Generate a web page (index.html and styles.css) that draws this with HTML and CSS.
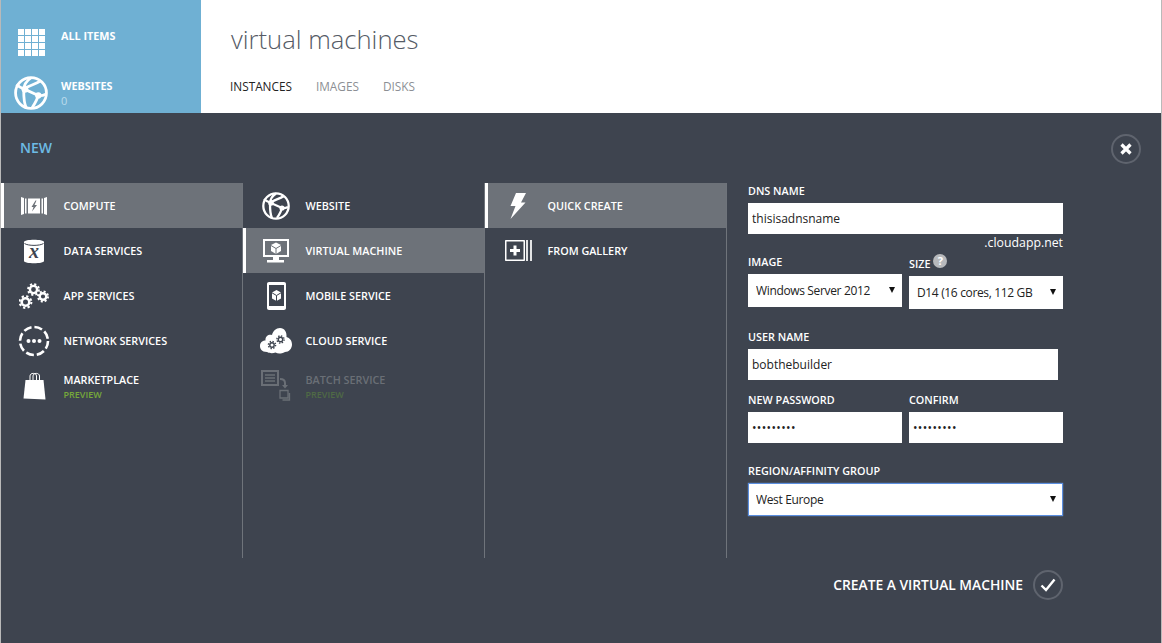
FILE: index.html
```html
<!DOCTYPE html>
<html lang="en">
<head>
<meta charset="utf-8">
<title>virtual machines</title>
<link rel="stylesheet" href="styles.css">
</head>
<body>
<div class="page">
  <header class="top">
    <nav class="tiles">
      <div class="tile tile-all">
        <svg class="tile-icon" width="27" height="27" viewBox="0 0 27 27"><path d="M0 3H27M0 10H27M0 17H27M0 24H27" stroke="#fff" stroke-width="6" stroke-dasharray="6 1" fill="none"/></svg>
        <div class="tile-text"><div class="tile-name">ALL ITEMS</div></div>
      </div>
      <div class="tile tile-web">
        <svg class="tile-icon" width="34" height="34" viewBox="0 0 28 28"><g fill="none" stroke="#fff" stroke-width="2.300"><circle cx="14" cy="14" r="12.700"/><path d="M14 1.500C10 4 8 8 8 12C8 17 8 22 10 26M2 7C4 9 6 10 9 11L20 16C22 16.500 24 16 26 15M20 16C19 20 17 23 15 26M9 10C14 7.500 18 6.500 22 4"/></g><g fill="#fff"><circle cx="9" cy="11" r="2.800"/><circle cx="20" cy="16" r="2.600"/></g></svg>
        <div class="tile-text tile-text-web"><div class="tile-name">WEBSITES</div><div class="tile-count">0</div></div>
      </div>
    </nav>
    <div class="heading">
      <h1 class="title">virtual machines</h1>
      <div class="tabs"><span class="tab tab-on">INSTANCES</span><span class="tab">IMAGES</span><span class="tab">DISKS</span></div>
    </div>
  </header>
  <main class="panel">
    <div class="panel-head">
      <div class="new">NEW</div>
      <div class="round close"><svg width="12" height="12" viewBox="0 0 12 12"><path d="M1.500 1.500L10.500 10.500M10.500 1.500L1.500 10.500" stroke="#fff" stroke-width="3.200" fill="none"/></svg></div>
    </div>
    <div class="panel-body">
      <ul class="col">
        <li class="item on">
          <span class="slot"><svg width="26" height="20" viewBox="0 0 26 20"><g fill="#fff"><path d="M0 1L3 2V18L0 19ZM4 2.500H5.500V17.500H4ZM20.500 2.500H22V17.500H20.500ZM23 2L26 1V19L23 18Z"/><path fill-rule="evenodd" d="M7 2.500H19V17.500H7ZM14.500 4.500L10.500 11H12.500L11 15.500L16 9H13.500L15.500 4.500Z"/></g></svg></span>
          <span class="lbl">COMPUTE</span>
        </li>
        <li class="item">
          <span class="slot"><svg width="22" height="26" viewBox="0 0 22 26"><path d="M1 4C1 1 21 1 21 4V23C21 26 1 26 1 23Z" fill="#fff"/><path d="M1.500 5.500C5 8 17 8 20.500 5.500" stroke="#3e444f" stroke-width="1" fill="none"/><text x="11" y="20" class="x-glyph">x</text></svg></span>
          <span class="lbl">DATA SERVICES</span>
        </li>
        <li class="item">
          <span class="slot"><svg width="30" height="26" viewBox="0 0 30 26"><g fill="none" stroke="#fff"><circle cx="14.500" cy="6.500" r="3.600" stroke-width="2.400"/><circle cx="14.500" cy="6.500" r="5.400" stroke-width="2" stroke-dasharray="2.100 2.150"/><circle cx="6.500" cy="19" r="3.800" stroke-width="2.600"/><circle cx="6.500" cy="19" r="5.900" stroke-width="2" stroke-dasharray="2.300 2.330"/><circle cx="24" cy="13.500" r="3.300" stroke-width="2.400"/><circle cx="24" cy="13.500" r="5" stroke-width="2" stroke-dasharray="2 1.930"/></g></svg></span>
          <span class="lbl">APP SERVICES</span>
        </li>
        <li class="item">
          <span class="slot"><svg width="32" height="32" viewBox="0 0 32 32"><circle cx="16" cy="16" r="14" fill="none" stroke="#fff" stroke-width="2.600" stroke-dasharray="8 3"/><g fill="#fff"><circle cx="10.500" cy="16" r="2"/><circle cx="16" cy="16" r="2"/><circle cx="21.500" cy="16" r="2"/></g></svg></span>
          <span class="lbl">NETWORK SERVICES</span>
        </li>
        <li class="item">
          <span class="slot"><svg width="23" height="28" viewBox="0 0 23 28"><path d="M2.500 8H20.500L22.500 27.500L0.500 26.500Z" fill="#fff"/><path d="M7 10V4C7 0.500 13.500 0.500 13.500 4V10M10 10V4C10 0.500 16.500 0.500 16.500 4V10" stroke="#fff" stroke-width="1" fill="none"/></svg></span>
          <div class="two"><span class="lbl">MARKETPLACE</span><span class="preview">PREVIEW</span></div>
        </li>
      </ul>
      <ul class="col">
        <li class="item">
          <span class="slot"><svg width="28" height="28" viewBox="0 0 28 28"><g fill="none" stroke="#fff" stroke-width="2.300"><circle cx="14" cy="14" r="12.700"/><path d="M14 1.500C10 4 8 8 8 12C8 17 8 22 10 26M2 7C4 9 6 10 9 11L20 16C22 16.500 24 16 26 15M20 16C19 20 17 23 15 26M9 10C14 7.500 18 6.500 22 4"/></g><g fill="#fff"><circle cx="9" cy="11" r="2.800"/><circle cx="20" cy="16" r="2.600"/></g></svg></span>
          <span class="lbl">WEBSITE</span>
        </li>
        <li class="item on">
          <span class="slot"><svg width="26" height="24" viewBox="0 0 26 24"><path fill-rule="evenodd" d="M0 0H26V18H16V21H21V23.500H4V21H10V18H0ZM2 2V16H24V2Z" fill="#fff"/><path d="M13 3.500L18 6V12L13 15L8 12V6Z" fill="#fff"/><path d="M13 9.500V15M8 6.500L13 9.500L18 6.500" stroke="#6d7279" stroke-width="1" fill="none"/></svg></span>
          <span class="lbl">VIRTUAL MACHINE</span>
        </li>
        <li class="item">
          <span class="slot"><svg width="19" height="28" viewBox="0 0 19 28"><path fill-rule="evenodd" d="M2 0H17C18.200 0 19 .8 19 2V26C19 27.200 18.200 28 17 28H2C.8 28 0 27.200 0 26V2C0 .8 .8 0 2 0ZM2 3V24H17V3Z" fill="#fff"/><path d="M9.500 8L14 10.500V16.500L9.500 19L5 16.500V10.500Z" fill="#fff"/><path d="M9.500 13.500V19M5 10.800L9.500 13.500L14 10.800" stroke="#3e444f" stroke-width="1" fill="none"/></svg></span>
          <span class="lbl">MOBILE SERVICE</span>
        </li>
        <li class="item">
          <span class="slot"><svg width="32" height="26" viewBox="0 0 32 26"><path d="M7 24C1.500 24 0 20.500 0 18C0 14 3 12.500 5.500 12.500C5 8 9 6 12 7C13 3 16 0 20 0C24.500 0 27 4 26.500 9C30 10 32 13 32 16.500C32 20.500 29 24 25 24C21 26 18 26 15.500 24.500C13 25.500 9.500 25.500 7 24Z" fill="#fff"/><g fill="none" stroke="#3e444f"><circle cx="12" cy="17" r="2.200" stroke-width="1.400"/><circle cx="12" cy="17" r="3.600" stroke-width="1.400" stroke-dasharray="1.400 1.430"/><circle cx="20.500" cy="11.500" r="2.200" stroke-width="1.400"/><circle cx="20.500" cy="11.500" r="3.600" stroke-width="1.400" stroke-dasharray="1.400 1.430"/></g></svg></span>
          <span class="lbl">CLOUD SERVICE</span>
        </li>
        <li class="item item-off">
          <span class="slot"><svg width="31" height="31" viewBox="0 0 31 31"><path fill-rule="evenodd" d="M0 0H18V16H0ZM2 2V14H16V2Z" fill="#6a6f76"/><path d="M4 5H14M4 8H14M4 11H14" stroke="#6a6f76" stroke-width="1.500"/><path d="M19 9C22 9 24 10 24 13V16" stroke="#6a6f76" stroke-width="2" fill="none"/><path d="M21 15H27L24 18.500Z" fill="#6a6f76"/><path d="M19 20.500H27V28H19ZM28.500 23V30H21.500" stroke="#6a6f76" stroke-width="1.300" fill="none"/></svg></span>
          <div class="two"><span class="lbl">BATCH SERVICE</span><span class="preview">PREVIEW</span></div>
        </li>
      </ul>
      <ul class="col">
        <li class="item on">
          <span class="slot"><svg width="16" height="26" viewBox="0 0 16 26"><path d="M6 0H16L11 9.500H15.500L0.500 26L5.500 13H0.500Z" fill="#fff"/></svg></span>
          <span class="lbl">QUICK CREATE</span>
        </li>
        <li class="item">
          <span class="slot"><svg width="27" height="21" viewBox="0 0 27 21"><path fill-rule="evenodd" d="M0 1C0 .4 .4 0 1 0H19C19.600 0 20 .4 20 1V20C20 20.600 19.600 21 19 21H1C.4 21 0 20.600 0 20ZM1.500 1.500V19.500H18.500V1.500Z" fill="#fff"/><path d="M10 5.500V15.500M5 10.500H15" stroke="#fff" stroke-width="3"/><path d="M22 0V21M26 0V21" stroke="#fff" stroke-width="1.700"/></svg></span>
          <span class="lbl">FROM GALLERY</span>
        </li>
      </ul>
      <form class="form">
        <label class="fl fl-dns">DNS NAME</label>
        <input class="in in-full" type="text" value="thisisadnsname">
        <div class="suffix">.cloudapp.net</div>
        <div class="pair pair-img">
          <div class="cell">
            <label class="fl">IMAGE</label>
            <div class="sel"><select class="in"><option>Windows Server 2012</option></select></div>
          </div>
          <div class="cell cell-size">
            <label class="fl">SIZE <span class="help">?</span></label>
            <div class="sel"><select class="in"><option>D14 (16 cores, 112 GB</option></select></div>
          </div>
        </div>
        <label class="fl fl-user">USER NAME</label>
        <input class="in in-user" type="text" value="bobthebuilder">
        <div class="pair pair-pw">
          <div class="cell"><label class="fl">NEW PASSWORD</label><input class="in pw" type="password" value="abcdefghi"></div>
          <div class="cell"><label class="fl">CONFIRM</label><input class="in pw" type="password" value="abcdefghi"></div>
        </div>
        <label class="fl fl-region">REGION/AFFINITY GROUP</label>
        <div class="sel sel-region"><select class="in"><option>West Europe</option></select></div>
        <div class="create">
          <span class="create-text">CREATE A VIRTUAL MACHINE</span>
          <div class="round"><svg width="16" height="14" viewBox="0 0 16 14"><path d="M1.500 7.500L6 12L14.500 1.500" stroke="#fff" stroke-width="2.400" fill="none"/></svg></div>
        </div>
      </form>
    </div>
  </main>
</div>
</body>
</html>
```
FILE: styles.css
```css
* { box-sizing: border-box; }
html, body { margin: 0; padding: 0; height: 100%; }
body { font-family: "Open Sans", "Noto Sans", sans-serif; background: #fff; overflow: hidden; }
.page { width: 1162px; height: 643px; display: flex; flex-direction: column; border-left: 1px solid #b9b9b9; border-right: 1px solid #b9b9b9; }

.top { height: 113px; display: flex; flex: none; background: #fff; overflow: hidden; }
.tiles { width: 200px; background: #6fb0d3; color: #fff; flex: none; padding-top: 29px; }
.tile { display: flex; }
.tile-all { height: 47px; }
.tile-icon { flex: none; }
.tile-all .tile-icon { margin-left: 17px; }
.tile-all .tile-text { margin-left: 16px; }
.tile-web .tile-icon { margin-left: 13px; }
.tile-web .tile-text { margin-left: 13px; }
.tile-text-web { padding-top: 3px; }
.tile-name { font-size: 10.8px; font-weight: 700; line-height: 14px; }
.tile-count { font-size: 11px; line-height: 16px; color: #bcdcec; }
.heading { padding: 22px 0 0 30px; }
.title { margin: 0; font-size: 25.6px; font-weight: 300; line-height: 36px; color: #555b66; }
.tabs { margin: 20px 0 0 -1px; display: flex; gap: 24px; font-size: 11.8px; line-height: 17px; color: #8c8f94; }
.tab-on { color: #222; }

.panel { flex: 1; background: #3e444f; color: #fff; }
.panel-head { height: 70px; padding: 26px 20px 0 19px; display: flex; justify-content: space-between; align-items: flex-start; }
.new { font-size: 14px; font-weight: 600; line-height: 17px; color: #6dbbe4; }
.round { width: 30px; height: 30px; border: 2px solid #5f646e; border-radius: 50%; display: flex; align-items: center; justify-content: center; flex: none; }
.close { margin-top: -5px; }

.panel-body { display: flex; height: 375px; }
.col { list-style: none; margin: 0; padding: 0; width: 242px; flex: none; border-right: 1px solid #6f747b; }
.item { height: 45px; display: flex; align-items: center; }
.item.on { background: #6d7279; border-left: 3px solid #fff; }
.slot { width: 66px; margin-right: -3.5px; flex: none; display: flex; align-items: center; justify-content: center; }
.on .slot { width: 60px; margin-right: -0.5px; }
.lbl { display: block; font-size: 10.8px; font-weight: 600; line-height: 15px; color: #fff; }
.two { padding-top: 2px; }
.preview { display: block; font-size: 9px; font-weight: 600; line-height: 12px; margin-top: 2px; color: #76a93a; }
.item-off .lbl { color: #6a6f76; }
.item-off .preview { color: #4f6a45; }
.x-glyph { font-family: "Liberation Serif", serif; font-style: italic; font-weight: 700; font-size: 20px; text-anchor: middle; fill: #3e444f; }

.form { width: 315px; margin-left: 21px; height: 375px; flex: none; }
.fl { display: block; font-size: 10.8px; font-weight: 600; line-height: 14px; color: #fff; }
.fl-dns { padding-top: 1px; height: 20px; }
.in { display: block; width: 100%; border: 0; border-radius: 0; background: #fff; height: 31px; padding: 0 4px; font-family: "Open Sans", "Noto Sans", sans-serif; font-size: 12px; color: #222; outline: 0; margin: 0; }
.in-full { width: 315px; }
.in-user { width: 310px; }
.pw { letter-spacing: 0.35px; }
.suffix { text-align: right; font-size: 12.3px; line-height: 18px; }
.pair { display: flex; gap: 7px; }
.cell { width: 154px; flex: none; }
.pair-img { margin-top: 1px; }
.pair-img .fl { height: 21px; padding-top: 2px; }
.pair-img .cell-size .fl { height: 23px; padding-top: 1px; }
.help { display: inline-block; width: 14px; height: 14px; border-radius: 50%; background: #b7b9bc; color: #fff; font-size: 11px; font-weight: 700; line-height: 14px; text-align: center; vertical-align: 3px; }
.sel { position: relative; }
.sel select { appearance: none; -webkit-appearance: none; height: 33px; padding-left: 8px; letter-spacing: -0.35px; }
.sel::after { content: ""; position: absolute; right: 7px; top: 13px; border-left: 3px solid transparent; border-right: 3px solid transparent; border-top: 6px solid #111; pointer-events: none; }
.fl-user { margin-top: 21px; height: 19px; }
.pair-pw { margin-top: 13px; }
.pair-pw .fl { height: 19px; }
.fl-region { margin-top: 21px; height: 19px; }
.sel-region select { border: 1px solid #5b8fe0; box-shadow: 0 0 1px #7aa7ea; padding-left: 7px; }
.create { margin-top: 54px; display: flex; align-items: center; justify-content: flex-end; gap: 10px; }
.create-text { font-size: 13.8px; font-weight: 600; line-height: 18px; }
```
